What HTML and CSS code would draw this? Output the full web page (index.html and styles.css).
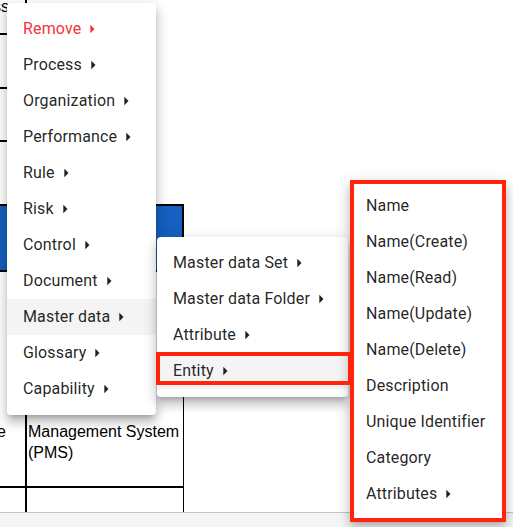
FILE: index.html
```html
<!DOCTYPE html>
<html>
<head>
<meta charset="utf-8">
<link rel="stylesheet" href="styles.css">
</head>
<body>
<div class="page">
  <div class="sheet">
    <div class="top-block">
      <div class="lcol">
        <div class="lcell c1"><span class="clip-ss">ss</span></div>
        <div class="lcell c2"></div>
        <div class="lcell c3"></div>
        <div class="lcell c4"></div>
      </div>
    </div>
    <div class="blue-row"></div>
    <div class="row main-row">
      <div class="cell left"><span class="clip-e">e</span></div>
      <div class="cell right">Management System<br>(PMS)</div>
    </div>
    <div class="row last-row">
      <div class="cell left"></div>
      <div class="cell right"></div>
    </div>
  </div>
  <div class="bottom-strip"></div>

  <div class="menu menu-main">
    <div class="item danger">Remove <svg class="caret" viewBox="0 0 24 24"><path d="M10 17l5-5-5-5v10z"/></svg></div>
    <div class="item">Process <svg class="caret" viewBox="0 0 24 24"><path d="M10 17l5-5-5-5v10z"/></svg></div>
    <div class="item">Organization <svg class="caret" viewBox="0 0 24 24"><path d="M10 17l5-5-5-5v10z"/></svg></div>
    <div class="item">Performance <svg class="caret" viewBox="0 0 24 24"><path d="M10 17l5-5-5-5v10z"/></svg></div>
    <div class="item">Rule <svg class="caret" viewBox="0 0 24 24"><path d="M10 17l5-5-5-5v10z"/></svg></div>
    <div class="item">Risk <svg class="caret" viewBox="0 0 24 24"><path d="M10 17l5-5-5-5v10z"/></svg></div>
    <div class="item">Control <svg class="caret" viewBox="0 0 24 24"><path d="M10 17l5-5-5-5v10z"/></svg></div>
    <div class="item">Document <svg class="caret" viewBox="0 0 24 24"><path d="M10 17l5-5-5-5v10z"/></svg></div>
    <div class="item active">Master data <svg class="caret" viewBox="0 0 24 24"><path d="M10 17l5-5-5-5v10z"/></svg></div>
    <div class="item">Glossary <svg class="caret" viewBox="0 0 24 24"><path d="M10 17l5-5-5-5v10z"/></svg></div>
    <div class="item">Capability <svg class="caret" viewBox="0 0 24 24"><path d="M10 17l5-5-5-5v10z"/></svg></div>
  </div>

  <div class="menu menu-sub">
    <div class="item">Master data Set <svg class="caret" viewBox="0 0 24 24"><path d="M10 17l5-5-5-5v10z"/></svg></div>
    <div class="item">Master data Folder <svg class="caret" viewBox="0 0 24 24"><path d="M10 17l5-5-5-5v10z"/></svg></div>
    <div class="item">Attribute <svg class="caret" viewBox="0 0 24 24"><path d="M10 17l5-5-5-5v10z"/></svg></div>
    <div class="item active">Entity <svg class="caret" viewBox="0 0 24 24"><path d="M10 17l5-5-5-5v10z"/></svg></div>
  </div>

  <div class="menu menu-third">
    <div class="item">Name</div>
    <div class="item">Name(Create)</div>
    <div class="item">Name(Read)</div>
    <div class="item">Name(Update)</div>
    <div class="item">Name(Delete)</div>
    <div class="item">Description</div>
    <div class="item">Unique Identifier</div>
    <div class="item">Category</div>
    <div class="item">Attributes <svg class="caret" viewBox="0 0 24 24"><path d="M10 17l5-5-5-5v10z"/></svg></div>
  </div>

  <div class="annot annot-entity"></div>
  <div class="annot annot-third"></div>
</div>
</body>
</html>
```

FILE: styles.css
```css
html, body {
  margin: 0;
  padding: 0;
  background: #ffffff;
}

.page {
  position: relative;
  width: 513px;
  height: 527px;
  overflow: hidden;
  font-family: "Liberation Sans", Arial, sans-serif;
  font-size: 16px;
  color: #000;
}

.sheet {
  height: 512px;
  display: flex;
  flex-direction: column;
}

.top-block {
  height: 204px;
  display: flex;
}

.lcol {
  width: 25px;
  border-right: 2px solid #000;
  display: flex;
  flex-direction: column;
}

.lcell {
  overflow: hidden;
  border-bottom: 2px solid #000;
  line-height: 21px;
  white-space: nowrap;
}

.c1 { height: 33px; }
.c2 { height: 52px; }
.c3 { height: 51px; }
.c4 { flex: 1; border-bottom: none; }

.clip-ss {
  display: block;
  margin-top: -4px;
  margin-left: -7px;
}

.blue-row {
  height: 64px;
  width: 182px;
  background: #1660bf;
  border-top: 2px solid #000;
  border-bottom: 2px solid #000;
  border-right: 2px solid #000;
  flex: none;
}

.row {
  display: flex;
  width: 184px;
}

.main-row {
  height: 214px;
  border-bottom: 2px solid #000;
}

.last-row {
  flex: 1;
}

.cell {
  display: flex;
  flex-direction: column;
  justify-content: flex-end;
  line-height: 21px;
  overflow: hidden;
  white-space: nowrap;
}

.cell.left {
  width: 25px;
  border-right: 2px solid #000;
  padding-bottom: 44px;
}

.cell.right {
  flex: 1;
  border-right: 1px solid #000;
  padding-left: 1px;
  padding-bottom: 23px;
}

.last-row .cell.left,
.last-row .cell.right {
  padding-bottom: 0;
}

.clip-e {
  display: block;
  margin-left: -3px;
}

.bottom-strip {
  height: 14px;
  border-top: 1px solid #c4c4c4;
  background: #f4f4f4;
}

/* menus */
.menu {
  position: absolute;
  background: #fff;
  border-radius: 4px;
  padding: 8px 0;
  box-shadow: 0px 5px 5px -3px rgba(0,0,0,0.2),
              0px 8px 10px 1px rgba(0,0,0,0.14),
              0px 3px 14px 2px rgba(0,0,0,0.12);
  font-family: Roboto, "Noto Sans", sans-serif;
  font-size: 16px;
  letter-spacing: 0.15px;
  color: rgba(0,0,0,0.87);
}

.menu-main {
  left: 7px;
  top: 3px;
  width: 149px;
}

.menu-sub {
  left: 157px;
  top: 237px;
  width: 191px;
}

.menu-third {
  left: 350px;
  top: 180px;
  width: 156px;
}

.item {
  height: 36px;
  padding: 0 16px;
  display: flex;
  align-items: center;
  line-height: 24px;
  white-space: nowrap;
}

.item.active {
  background: #f4f4f4;
}

.item.danger {
  color: #f5333a;
}

.caret {
  width: 20px;
  height: 20px;
  margin-left: 1px;
  fill: currentColor;
  flex: none;
}

.annot {
  position: absolute;
  border: 4px solid #ff240a;
  box-sizing: border-box;
}

.annot-entity {
  left: 156px;
  top: 352px;
  width: 196px;
  height: 33px;
}

.annot-third {
  left: 350px;
  top: 180px;
  width: 156px;
  height: 342px;
}
```
